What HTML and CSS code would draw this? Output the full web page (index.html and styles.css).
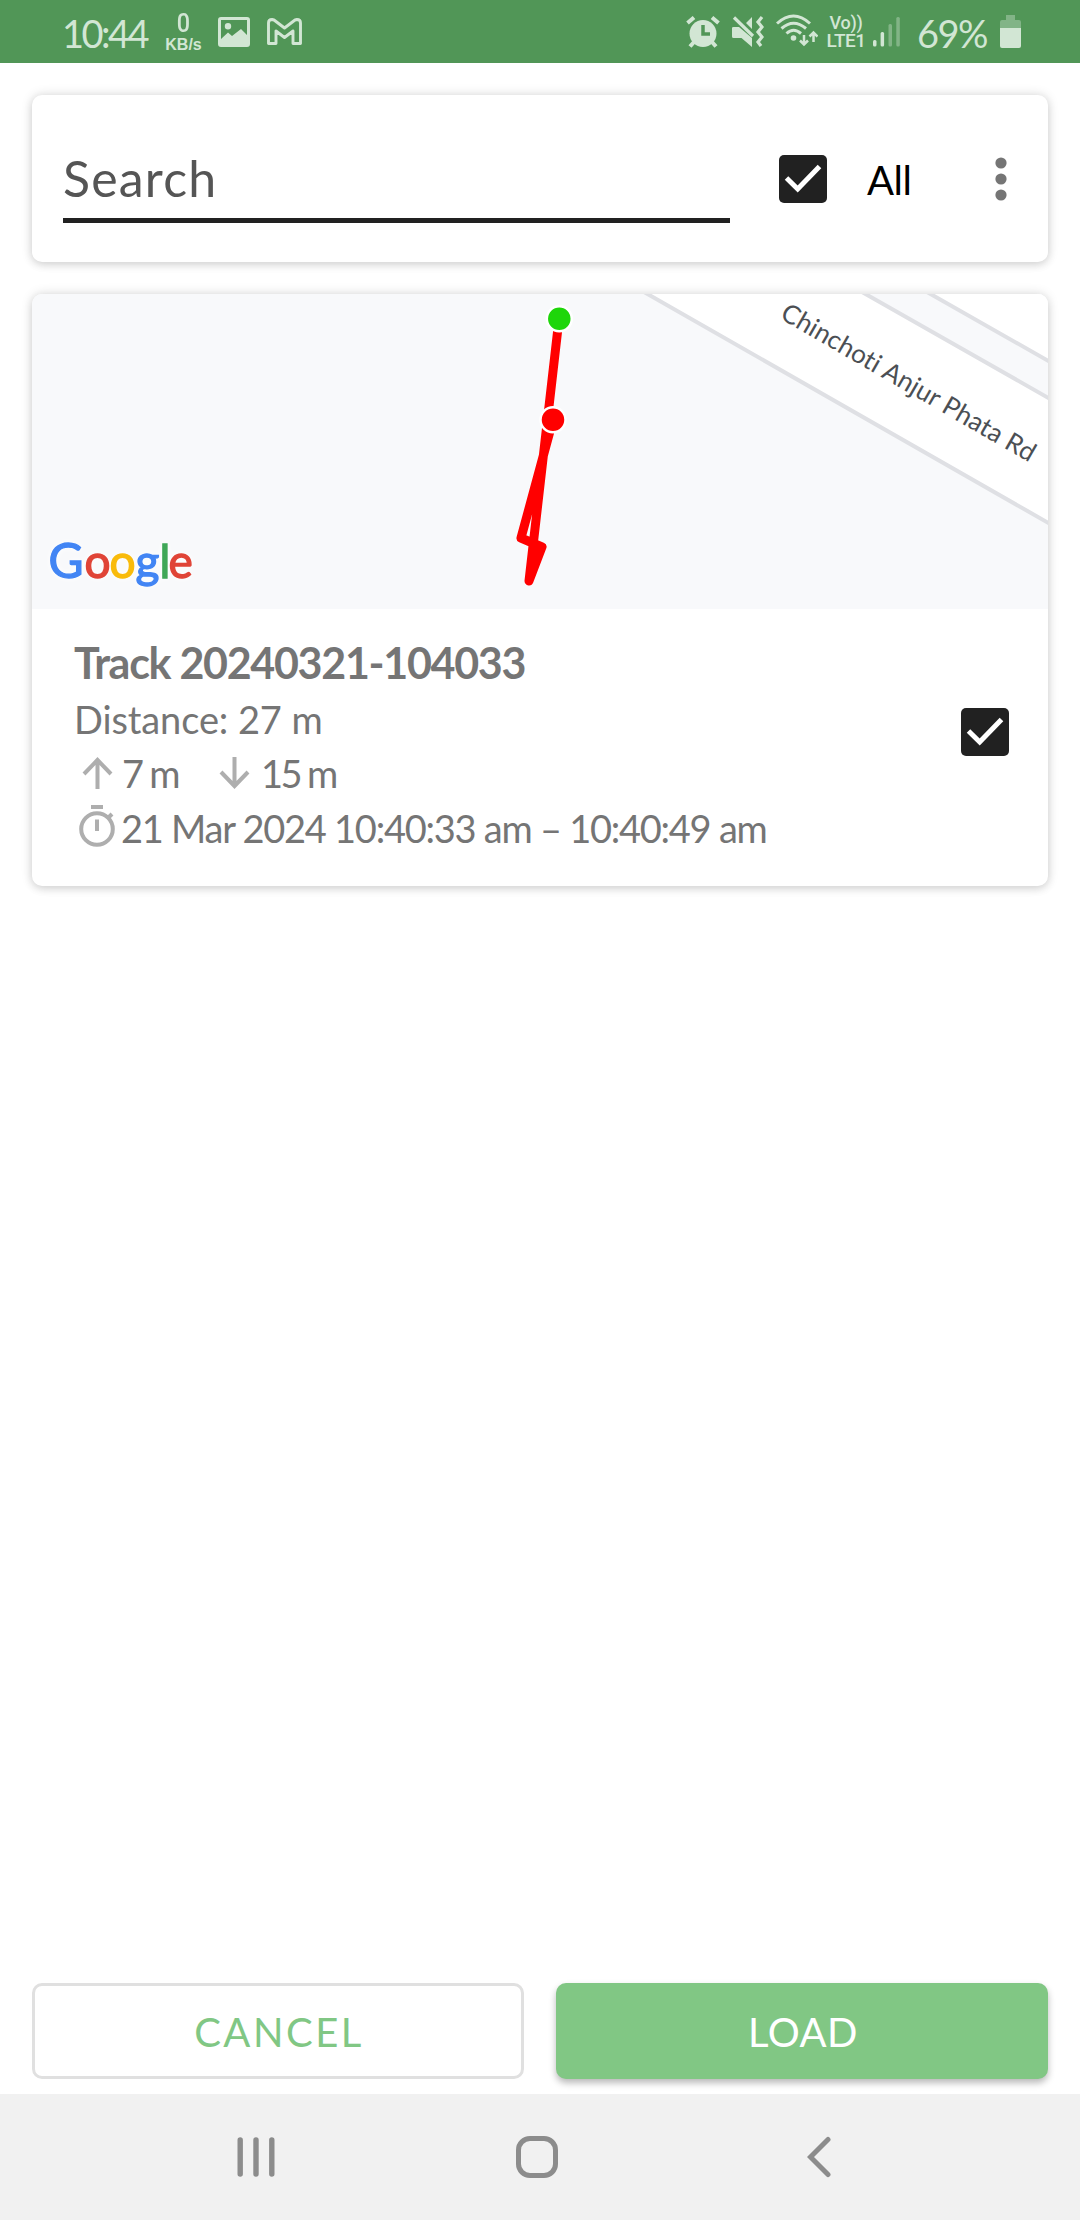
FILE: index.html
```html
<!DOCTYPE html>
<html lang="en">
<head>
<meta charset="utf-8">
<title>Load tracks</title>
<link rel="stylesheet" href="styles.css">
</head>
<body>
<div class="screen">
  <header class="status">
    <div class="status-left">
      <span class="clock">10:44</span>
      <span class="netspeed"><b class="rate">0</b><b class="unit">KB/s</b></span>
      <svg class="ic-image" width="32" height="30" viewBox="0 0 32 30"><path fill="currentColor" fill-rule="evenodd" d="M3 0H29Q32 0 32 3V27Q32 30 29 30H3Q0 30 0 27V3Q0 0 3 0ZM3 3V22L10 15.500L14 19L23 12L29 18V3ZM10 6a3.200 3.200 0 1 1 0 6.400a3.200 3.200 0 1 1 0-6.400Z"/></svg>
      <svg class="ic-mail" width="35" height="27" viewBox="0 0 35 27"><path fill="none" stroke="currentColor" stroke-width="2.900" stroke-linejoin="round" d="M1.500 5Q1.500 1.500 5 1.500L7 2L17.500 10L28 2L30 1.500Q33.500 1.500 33.500 5V25.500H26V13L17.500 19.500L9 13V25.500H1.500Z"/></svg>
    </div>
    <div class="status-right">
      <svg class="ic-alarm" width="34" height="32" viewBox="0 0 34 32"><g fill="none" stroke="currentColor" stroke-width="4"><path d="M1.500 7L8 1.500M26 1.500L32.500 7M8 26L4 30.500M26 26L30 30.500"/></g><circle cx="17" cy="17.500" r="13.500" fill="currentColor"/><path d="M17 9V18H24" fill="none" stroke="#519657" stroke-width="3.500"/></svg>
      <svg class="ic-mute" width="32" height="32" viewBox="0 0 32 32"><path fill="currentColor" d="M0 12Q0 11 1.500 11H7L20 22V31L9.500 22H1.500Q0 22 0 20.500ZM20 1V13L14 7Z"/><path d="M2 1.500L21 20" stroke="currentColor" stroke-width="3.200"/><path d="M30 1L26 6L30 11L26 16L30 21L26 26L29 30" fill="none" stroke="currentColor" stroke-width="3.200"/></svg>
      <svg class="ic-wifi" width="42" height="33" viewBox="0 0 42 33"><g fill="none" stroke="currentColor" stroke-width="3"><path d="M1 9.500Q17.500-5.500 34 9.500M5.500 14.500Q17.500 4 30 14.500M10.500 19.500Q17.500 13 25 19.500"/><path d="M28 21V30M24 26.500L28 30.500L32 26.500M37.500 28V19M33.500 22.500L37.500 18.500L41.500 22.500" stroke-width="2.500"/></g><circle cx="17.500" cy="24" r="2.800" fill="currentColor"/></svg>
      <span class="volte"><b class="vo">Vo))</b><b class="lte">LTE1</b></span>
      <svg class="ic-signal" width="27" height="30" viewBox="0 0 27 30"><g fill="currentColor"><rect y="23" width="3.500" height="6.500" rx="1.500"/><rect x="7.600" y="15" width="3.500" height="14.500" rx="1.500"/><g opacity=".38"><rect x="15.500" y="7" width="3.500" height="22.500" rx="1.500"/><rect x="23.300" width="3.500" height="29.500" rx="1.500"/></g></g></svg>
      <span class="percent">69%</span>
      <svg class="ic-battery" width="21" height="33" viewBox="0 0 21 33"><path fill="currentColor" opacity=".38" d="M6 0H15V5H19Q21 5 21 7V13H0V7Q0 5 2 5H6Z"/><path fill="currentColor" d="M0 13H21V31Q21 33 19 33H2Q0 33 0 31Z"/></svg>
    </div>
  </header>

  <main class="content">
    <section class="card search">
      <div class="field">Search</div>
      <svg class="check" width="48" height="48" viewBox="0 0 48 48"><rect width="48" height="48" rx="5" fill="#212121"/><path d="M7.500 23L18.700 34L40.500 11.500" fill="none" stroke="#fff" stroke-width="5"/></svg>
      <span class="all">All</span>
      <svg class="more" width="12" height="44" viewBox="0 0 12 44" fill="#757575"><circle cx="6" cy="6" r="5.600"/><circle cx="6" cy="22" r="5.600"/><circle cx="6" cy="38" r="5.600"/></svg>
    </section>

    <section class="card track">
      <svg class="map" width="1016" height="315" viewBox="32 294 1016 315">
        <rect x="32" y="294" width="1016" height="315" fill="#f8f9fb"/>
        <path d="M645 292L1050 524V292Z" fill="#fff"/>
        <path d="M863 292L1050 399V292Z" fill="#f8f9fb"/>
        <path d="M928 292L1050 361V292Z" fill="#fff"/>
        <g fill="none" stroke="#dfe0e4" stroke-width="4"><path d="M644 292L1052 525M862 292L1052 400M927 292L1052 363"/></g>
        <text class="road" transform="translate(779 318) rotate(30)" textLength="289" lengthAdjust="spacing">Chinchoti Anjur Phata Rd</text>
        <path d="M559 319L529 581L542 547L521 538L553 420" fill="none" stroke="#f00" stroke-width="9" stroke-linejoin="round"/>
        <circle cx="559.300" cy="318.700" r="12.500" fill="#1ed60a" stroke="#fff" stroke-width="2.500"/>
        <circle cx="553" cy="419.700" r="12.500" fill="#f00" stroke="#fff" stroke-width="2.500"/>
        <text class="logo" y="578"><tspan class="blue big" x="48.500">G</tspan><tspan class="red" x="84.500">o</tspan><tspan class="yellow" x="109.500">o</tspan><tspan class="blue" x="135.500">g</tspan><tspan class="green" x="159.500">l</tspan><tspan class="red" x="168.500">e</tspan></text>
      </svg>
      <div class="details">
        <div class="lines">
          <h2 class="title">Track 20240321-104033</h2>
          <p class="line distance">Distance: 27 m</p>
          <p class="line elevation">
            <svg class="arrow" width="31" height="32" viewBox="0 0 31 32"><path d="M15.500 32V3M2 17L15.500 3L29 17" fill="none" stroke="#aeaeae" stroke-width="4"/></svg>
            <span class="up">7 m</span>
            <svg class="arrow" width="31" height="32" viewBox="0 0 31 32"><path d="M15.500 0V29M2 15L15.500 29L29 15" fill="none" stroke="#aeaeae" stroke-width="4"/></svg>
            <span class="down">15 m</span>
          </p>
          <p class="line when">
            <svg class="timer" width="36" height="42" viewBox="0 0 36 42"><g fill="none" stroke="#aeaeae" stroke-width="4"><path d="M12 2H24M18 14.500V26M29 13L33 9"/><circle cx="18" cy="24" r="15.800"/></g></svg>
            <span class="period">21 Mar 2024 10:40:33 am – 10:40:49 am</span>
          </p>
        </div>
        <svg class="check" width="48" height="48" viewBox="0 0 48 48"><rect width="48" height="48" rx="5" fill="#212121"/><path d="M7.500 23L18.700 34L40.500 11.500" fill="none" stroke="#fff" stroke-width="5"/></svg>
      </div>
    </section>
  </main>

  <div class="actions">
    <button class="btn cancel">CANCEL</button>
    <button class="btn load">LOAD</button>
  </div>

  <nav class="navbar">
    <svg width="38" height="42" viewBox="0 0 38 42"><path d="M3.200 4V38M19 4V38M34.800 4V38" stroke="#8c8c8c" stroke-width="5.400" stroke-linecap="round"/></svg>
    <svg class="home" width="42" height="42" viewBox="0 0 42 42"><rect x="2.500" y="2.500" width="37" height="37" rx="11.500" fill="none" stroke="#8c8c8c" stroke-width="5"/></svg>
    <svg class="back" width="24" height="42" viewBox="0 0 24 42"><path d="M21 3.500L3.500 21L21 38.500" fill="none" stroke="#8c8c8c" stroke-width="5" stroke-linecap="round"/></svg>
  </nav>
</div>
</body>
</html>
```

FILE: styles.css
```css
* { box-sizing: border-box; }
body { margin: 0; background: #fff; font-family: Lato, "Noto Sans", sans-serif; font-variant-ligatures: none; }
svg { display: block; flex: none; }
.screen { width: 1080px; height: 2220px; display: flex; flex-direction: column; background: #fff; }

.status { height: 63px; padding: 0 59px 0 62px; display: flex; justify-content: space-between; background: #519657; color: #d2e6d4; }
.status-left, .status-right { display: flex; align-items: flex-start; }
.clock, .percent { font-size: 38px; line-height: 46px; margin-top: 10px; white-space: nowrap; }
.clock { width: 103px; letter-spacing: -2.500px; }
.netspeed, .volte { display: flex; flex-direction: column; align-items: center; white-space: nowrap; }
.netspeed { width: 37px; margin-right: 16px; padding-top: 9px; font-family: "Liberation Sans", sans-serif; }
.rate { font: 500 26px/28px Roboto, sans-serif; transform: scaleX(.9); }
.unit { font-size: 16px; line-height: 15px; }
.ic-image { margin: 17px 17px 0 0; }
.ic-mail { margin-top: 18px; }
.ic-alarm { margin: 16px 12px 0 0; }
.ic-mute { margin: 16px 12px 0 0; }
.ic-wifi { margin: 14px 9px 0 0; }
.volte { width: 38px; margin-right: 8px; padding-top: 14px; font-family: Roboto, sans-serif; }
.vo { font-size: 18px; line-height: 18px; font-weight: 500; letter-spacing: -.2px; }
.lte { font-size: 19px; line-height: 18px; font-weight: 500; letter-spacing: -.5px; }
.ic-signal { margin: 17px 17px 0 0; }
.percent { width: 83px; letter-spacing: -1.500px; }
.ic-battery { margin-top: 15px; }

.content { flex: 1; padding: 32px 32px 0; display: flex; flex-direction: column; gap: 32px; }
.card { background: #fff; border-radius: 10px; box-shadow: 0 3px 8px rgba(0, 0, 0, .1), 0 0 12px rgba(0, 0, 0, .14); }
.search { height: 167px; padding-left: 31px; display: flex; align-items: flex-start; }
.field { width: 667px; height: 128px; border-bottom: 5px solid #212121; padding-top: 53px; font-size: 50px; line-height: 60px; letter-spacing: 1.200px; color: #555; }
.search .check { margin: 60px 0 0 49px; }
.all { width: 128px; margin: 60px 0 0 40px; font-size: 40px; line-height: 50px; letter-spacing: -.5px; color: #000; }
.more { margin-top: 62px; }

.track { height: 592px; }
.road { font-size: 26px; fill: #4b4f54; }
.logo { font-size: 46px; stroke-width: 1.300px; filter: drop-shadow(0 0 3px #fff); }
.big { font-size: 48px; }
.blue { fill: #4285f4; stroke: #4285f4; }
.red { fill: #e04437; stroke: #e04437; }
.yellow { fill: #f9bb0b; stroke: #f9bb0b; }
.green { fill: #3fa757; stroke: #3fa757; }
.map { border-radius: 10px 10px 0 0; }
.details { padding: 25px 39px 0 42px; display: flex; justify-content: space-between; color: #757575; }
.details .check { margin-top: 74px; }
.title { margin: 0; font-size: 43px; line-height: 58px; font-weight: 700; letter-spacing: -1.300px; }
.line { margin: 0; height: 54px; font-size: 38px; line-height: 55px; white-space: nowrap; }
.distance { letter-spacing: -.1px; }
.elevation, .when { display: flex; align-items: center; }
.elevation { padding-left: 8px; }
.up { width: 97px; margin: 1px 0 0 9px; letter-spacing: -2.200px; }
.down { margin: 1px 0 0 11px; letter-spacing: -2.600px; }
.when { padding-left: 5px; }
.timer { margin-top: -3px; }
.period { margin: 2px 0 0 6px; letter-spacing: -1.250px; }

.actions { height: 111px; padding: 0 32px; display: flex; gap: 32px; }
.btn { width: 492px; height: 96px; border: 0; border-radius: 10px; font: 400 40px/98px Lato, sans-serif; letter-spacing: 2.500px; padding: 0 0 0 2px; }
.cancel { background: #fff; border: 3px solid #e0e0e0; color: #81c784; line-height: 92px; }
.load { background: #81c784; color: #fff; letter-spacing: .5px; box-shadow: 0 4px 7px rgba(0, 0, 0, .28); }

.navbar { height: 126px; padding: 42px 0 0 237px; display: flex; background: #f1f1f1; }
.home { margin-left: 241px; }
.back { margin-left: 249px; }
```
